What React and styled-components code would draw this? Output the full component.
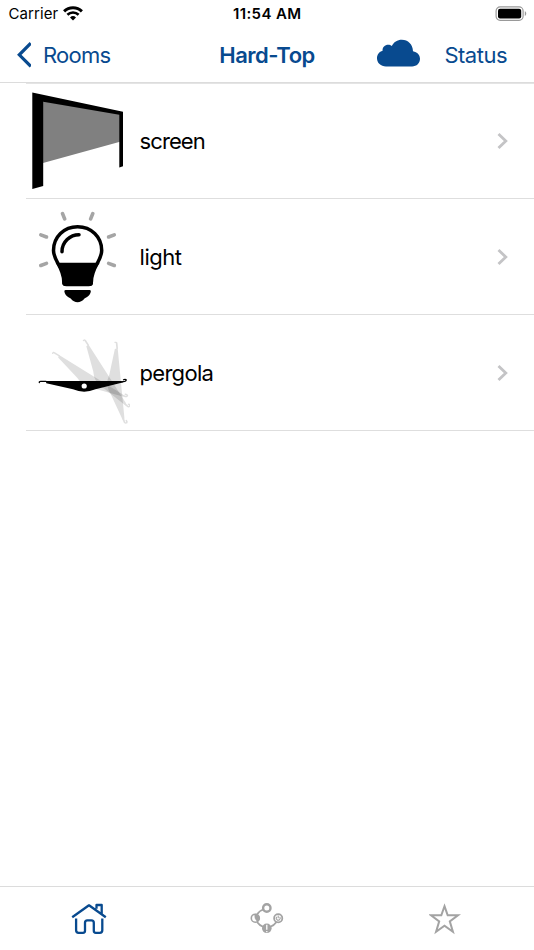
import React from 'react';
import styled, { createGlobalStyle } from 'styled-components';

const BLUE = '#084a8f';
const GREY = '#a3a3a3';

const GlobalStyle = createGlobalStyle`
	* {
		box-sizing: border-box;
	}

	body {
		margin: 0;
		background: #fff;
		font-family: Inter, "Liberation Sans", sans-serif;
		color: #000;
	}

	svg {
		display: block;
		flex: none;
	}
`;

const Screen = styled.div`
	display: flex;
	flex-direction: column;
	width: 534px;
	height: 950px;
	overflow: hidden;
	background: #fff;
`;

const StatusBar = styled.div`
	display: grid;
	grid-template-columns: 1fr auto 1fr;
	align-items: center;
	height: 27px;
	padding: 0 7px 0 8.5px;
	font-size: 15px;
	line-height: 27px;
`;

const Carrier = styled.div`
	display: flex;
	align-items: center;
	gap: 5px;
	letter-spacing: 0.1px;

	svg {
		margin-bottom: 1px;
	}
`;

const Time = styled.div`
	margin-left: -1px;
	font-weight: 600;
	letter-spacing: 0.4px;
`;

const Battery = styled.div`
	justify-self: end;
`;

const NavBar = styled.header`
	display: grid;
	grid-template-columns: 1fr auto 1fr;
	align-items: center;
	height: 56px;
	padding: 0 16px;
	border-bottom: 1px solid #dcdcdc;
	color: ${BLUE};
	font-size: 22px;
	line-height: 28px;
`;

const NavButton = styled.a`
	display: flex;
	align-items: center;
	gap: 12px;
	letter-spacing: ${({ $spacing }) => $spacing || '-0.75px'};
`;

const Title = styled.h1`
	margin: 0;
	font-size: 22px;
	font-weight: 600;
	line-height: 28px;
	letter-spacing: -0.5px;
`;

const NavActions = styled.div`
	display: flex;
	align-items: center;
	justify-content: flex-end;
	gap: 24px;
	padding-right: 11px;

	svg {
		margin-bottom: 3px;
	}
`;

const List = styled.ul`
	flex: 1;
	margin: 0;
	padding: 0 0 0 26px;
	list-style: none;
`;

const Row = styled.li`
	display: flex;
	align-items: center;
	height: 116px;
	padding-right: 26px;
	border-bottom: 1px solid #dedede;

	&:first-child {
		box-shadow: inset 0 1px 0 #e4e4e4;
	}
`;

const Label = styled.span`
	flex: 1;
	padding-left: 9.5px;
	font-size: 22px;
	line-height: 28px;
	letter-spacing: ${({ $spacing }) => $spacing};
`;

const TabBar = styled.nav`
	display: grid;
	grid-template-columns: repeat(3, 1fr);
	height: 64px;
	border-top: 1px solid #dcdcdc;
`;

const Tab = styled.a`
	display: flex;
	align-items: center;
	justify-content: center;
	color: ${({ $active }) => ($active ? BLUE : GREY)};
`;

function WifiIcon() {
	return (
		<svg width="20" height="15" viewBox="0 0 20 15" fill="none" stroke="#000">
			<path d="M1.1 5.4a12.8 12.8 0 0 1 17.8 0" strokeWidth="3" />
			<path d="M4.4 8.8a8 8 0 0 1 11.2 0" strokeWidth="2.6" />
			<path d="M10 14.4l-3-3a4.3 4.3 0 0 1 6 0z" fill="#000" stroke="none" />
		</svg>
	);
}

function BatteryIcon() {
	return (
		<svg width="32" height="16" viewBox="0 0 32 16">
			<rect x="1.1" y="0.9" width="27" height="13.4" rx="4" fill="none" stroke="#999" strokeWidth="1.2" />
			<rect x="3" y="2.8" width="23.2" height="9.6" rx="2" />
			<path d="M29.8 5.3c1.9.6 1.9 4 0 4.6z" fill="#999" />
		</svg>
	);
}

function BackIcon() {
	return (
		<svg width="15" height="26" viewBox="0 0 15 26" fill="none" stroke={BLUE} strokeWidth="3.2">
			<path d="M14.8 1.2L3.3 12.8L14.8 24.4" />
		</svg>
	);
}

function CloudIcon() {
	return (
		<svg width="43" height="28" viewBox="0 0 43 28" fill={BLUE}>
			<path d="M9 27.5C3.8 27.5 0 24 0 19.3C0 15.6 2.3 12.8 5.6 11.8C5.2 8.2 8 5.8 11.2 5.8C12.6 5.8 13.8 6.3 14.8 7C16.6 3 20.5.7 24.8.7C31 .7 35.8 5.3 36 12.2C40.2 13 43 15.8 43 19.8C43 24.2 39.8 27.5 35 27.5Z" />
		</svg>
	);
}

function ChevronIcon() {
	return (
		<svg width="11" height="18" viewBox="0 0 11 18" fill="none" stroke="#c4c4c6" strokeWidth="2.8">
			<path d="M1.5 2L8.8 9L1.5 16" />
		</svg>
	);
}

function ScreenIcon() {
	return (
		<svg width="104" height="116" viewBox="26 83 104 116">
			<path d="M43 101L120 114V141.8L43 163Z" fill="#808080" />
			<path d="M32.3 92.6L123 111.8V166.3L119.3 167.5V114.8L43.2 101.8V186L32.3 189Z" />
		</svg>
	);
}

function LightIcon() {
	return (
		<svg width="104" height="116" viewBox="26 199 104 116">
			<g stroke="#a5a5a5" strokeWidth="3.5" strokeLinecap="round">
				<path d="M62.5 213.5l2.2 5.5M92.8 213.5l-2.2 5.5M40.8 234.8l5.7 2.2M114.3 234.8l-5.7 2.2M40.8 265.5l5.7-2.2M114.3 265.5l-5.7-2.2" />
			</g>
			<path d="M77.6 226.8C64 226.8 53.5 237 53.5 250.5C53.5 261 63.5 267 63.8 281.5Q63.8 284.5 66.5 284.5H88.6Q91.4 284.5 91.4 281.5C91.7 267 101.7 261 101.7 250.5C101.7 237 91.2 226.8 77.6 226.8Z" fill="#fff" stroke="#000" strokeWidth="3.5" />
			<path d="M55.5 262.8H99.8C96 268 93 272.5 93 278.5V282.5Q93 286 90 286H65.2Q62.2 286 62.2 282.5V278.5C62.2 272.5 59.3 268 55.5 262.8Z" />
			<path d="M62 251.7C62 242 70 234.7 79 234.7" fill="none" stroke="#000" strokeWidth="3.5" strokeLinecap="round" />
			<path d="M65.5 290H89.7Q91.2 290 90.8 291.7C89.8 296 86.5 297.2 84.5 298.5C82.5 301 80 302.2 77.6 302.2C75 302.2 72.7 301 70.7 298.5C68.7 297.2 65.4 296 64.4 291.7Q64 290 65.5 290Z" />
		</svg>
	);
}

function Blade(props) {
	return (
		<g {...props}>
			<path d="M45.8 381H121L123.5 382.2L95.5 389.3Q84 394 73 389.3L46.3 383.2Z" fill="currentColor" />
			<path d="M39.3 382.5q-.2-1.1 1.3-1.1H46M121 381.9l3.8-.6q1.8-.5 1.2-1.7q-1.2-.6-2.5.1" fill="none" stroke="currentColor" strokeWidth="1.3" strokeLinecap="round" />
		</g>
	);
}

function PergolaIcon() {
	return (
		<svg width="104" height="116" viewBox="26 315 104 116">
			<Blade opacity="0.12" transform="translate(52.8 353) rotate(31.7) scale(0.99 1.15) translate(-39.3 -382.3)" />
			<Blade opacity="0.12" transform="translate(83.8 340.3) rotate(57.4) scale(0.925 1.25) translate(-39.3 -382.3)" />
			<Blade opacity="0.12" transform="translate(115.4 342.3) rotate(84.5) scale(0.937 1.3) translate(-39.3 -382.3)" />
			<Blade />
			<circle cx="84.2" cy="386" r="2.6" fill="#fff" />
		</svg>
	);
}

function HomeIcon() {
	return (
		<svg width="36" height="32" viewBox="0 0 36 32" fill="none" stroke="currentColor" strokeWidth="2.3" strokeLinejoin="round">
			<path d="M1.2 14.3L18 2.3L34.8 14.3M25.5 5.7V2H30.7V11" />
			<path d="M5.1 15.5V27.3Q5.1 29.8 7.6 29.8H12Q14 29.8 14 27.8V19.8Q14 17.4 16.4 17.4H20.4Q22.8 17.4 22.8 19.8V27.8Q22.8 29.8 24.8 29.8H28.8Q31.3 29.8 31.3 27.3V15.5" />
		</svg>
	);
}

function ScenesIcon() {
	return (
		<svg width="34" height="32" viewBox="250 903 34 32" fill="none" stroke="currentColor" strokeWidth="1.8">
			<path d="M263.5 909.5Q259.5 910.5 257 914.5M257 922Q259.5 925.5 263.5 927M270 927Q274 925.5 276.5 922" />
			<circle cx="266.8" cy="908" r="3.7" strokeWidth="2.4" />
			<circle cx="255.3" cy="918.2" r="4" strokeWidth="1.6" />
			<path d="M255 914.2Q254 918.5 257.5 921.5A4 4 0 0 0 255 914.2Z" fill="currentColor" strokeWidth="0.8" />
			<circle cx="278.2" cy="918.2" r="4.1" strokeWidth="1.8" />
			<path d="M276.7 916.8a2 2 0 1 0 3 0M278.2 915.5v2.7" strokeWidth="1.1" />
			<circle cx="266.8" cy="928.3" r="4.8" fill="currentColor" stroke="none" />
			<path d="M266.8 924.8v5M266.8 931v1.2" stroke="#fff" strokeWidth="1.3" />
		</svg>
	);
}

function StarIcon() {
	return (
		<svg width="32" height="32" viewBox="0 0 32 32" fill="none" stroke="currentColor" strokeWidth="2">
			<path d="M15.5 3.2L18.7 12.3H29L20.8 18.4L23.9 28.8L15.5 22.7L7.1 28.8L10.2 18.4L2 12.3H12.3Z" />
		</svg>
	);
}

const devices = [
	{ name: 'screen', icon: <ScreenIcon />, spacing: '-0.9px' },
	{ name: 'light', icon: <LightIcon />, spacing: '-0.45px' },
	{ name: 'pergola', icon: <PergolaIcon />, spacing: '-0.7px' },
];

function App() {
	return (
		<>
			<GlobalStyle />
			<Screen>
				<StatusBar>
					<Carrier>
						Carrier
						<WifiIcon />
					</Carrier>
					<Time>11:54 AM</Time>
					<Battery>
						<BatteryIcon />
					</Battery>
				</StatusBar>

				<NavBar>
					<NavButton>
						<BackIcon />
						Rooms
					</NavButton>
					<Title>Hard-Top</Title>
					<NavActions>
						<CloudIcon />
						<NavButton $spacing="-0.5px">Status</NavButton>
					</NavActions>
				</NavBar>

				<List>
					{devices.map(({ name, icon, spacing }) => (
						<Row key={name}>
							{icon}
							<Label $spacing={spacing}>{name}</Label>
							<ChevronIcon />
						</Row>
					))}
				</List>

				<TabBar>
					<Tab $active>
						<HomeIcon />
					</Tab>
					<Tab>
						<ScenesIcon />
					</Tab>
					<Tab>
						<StarIcon />
					</Tab>
				</TabBar>
			</Screen>
		</>
	);
}

export default App;
